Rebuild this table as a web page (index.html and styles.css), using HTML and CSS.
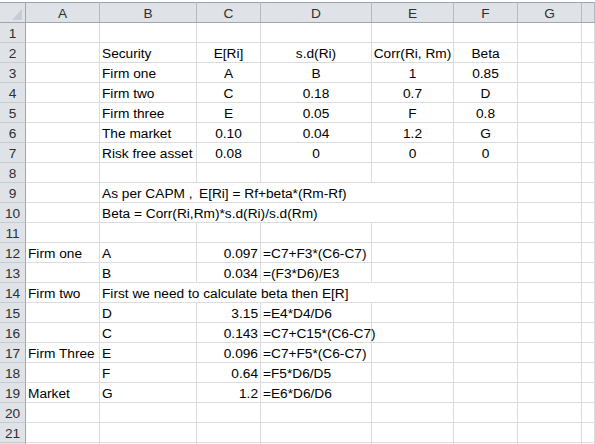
FILE: index.html
```html
<!DOCTYPE html>
<html>
<head>
<meta charset="utf-8">
<link rel="stylesheet" href="styles.css">
</head>
<body>
<div class="sheet">
  <div class="grid">
    <div class="corner"><svg width="10" height="11" viewBox="0 0 10 11"><polygon points="10,0 10,11 0,11" fill="#c8cdd3"/></svg></div>
    <div class="hd">A</div><div class="hd">B</div><div class="hd">C</div><div class="hd">D</div><div class="hd">E</div><div class="hd">F</div><div class="hd">G</div><div class="hd"></div>

    <div class="rh">1</div><div></div><div></div><div></div><div></div><div></div><div></div><div></div><div></div>
    <div class="rh">2</div><div></div><div>Security</div><div class="ctr">E[Ri]</div><div class="ctr">s.d(Ri)</div><div class="ctr">Corr(Ri, Rm)</div><div class="ctr">Beta</div><div></div><div></div>
    <div class="rh">3</div><div></div><div>Firm one</div><div class="ctr">A</div><div class="ctr">B</div><div class="ctr">1</div><div class="ctr">0.85</div><div></div><div></div>
    <div class="rh">4</div><div></div><div>Firm two</div><div class="ctr">C</div><div class="ctr">0.18</div><div class="ctr">0.7</div><div class="ctr">D</div><div></div><div></div>
    <div class="rh">5</div><div></div><div>Firm three</div><div class="ctr">E</div><div class="ctr">0.05</div><div class="ctr">F</div><div class="ctr">0.8</div><div></div><div></div>
    <div class="rh">6</div><div></div><div>The market</div><div class="ctr">0.10</div><div class="ctr">0.04</div><div class="ctr">1.2</div><div class="ctr">G</div><div></div><div></div>
    <div class="rh">7</div><div></div><div>Risk free asset</div><div class="ctr">0.08</div><div class="ctr">0</div><div class="ctr">0</div><div class="ctr">0</div><div></div><div></div>
    <div class="rh">8</div><div></div><div></div><div></div><div></div><div></div><div></div><div></div><div></div>
    <div class="rh">9</div><div></div><div class="nob">As per CAPM ,</div><div class="span3">E[Ri] = Rf+beta*(Rm-Rf)</div><div></div><div></div><div></div>
    <div class="rh">10</div><div></div><div class="span4">Beta = Corr(Ri,Rm)*s.d(Ri)/s.d(Rm)</div><div></div><div></div><div></div>
    <div class="rh">11</div><div></div><div></div><div></div><div></div><div></div><div></div><div></div><div></div>
    <div class="rh">12</div><div>Firm one</div><div>A</div><div class="r">0.097</div><div>=C7+F3*(C6-C7)</div><div></div><div></div><div></div><div></div>
    <div class="rh">13</div><div></div><div>B</div><div class="r">0.034</div><div>=(F3*D6)/E3</div><div></div><div></div><div></div><div></div>
    <div class="rh">14</div><div>Firm two</div><div class="span4">First we need to calculate beta then E[R]</div><div></div><div></div><div></div>
    <div class="rh">15</div><div></div><div>D</div><div class="r">3.15</div><div>=E4*D4/D6</div><div></div><div></div><div></div><div></div>
    <div class="rh">16</div><div></div><div>C</div><div class="r">0.143</div><div>=C7+C15*(C6-C7)</div><div></div><div></div><div></div><div></div>
    <div class="rh">17</div><div>Firm Three</div><div>E</div><div class="r">0.096</div><div>=C7+F5*(C6-C7)</div><div></div><div></div><div></div><div></div>
    <div class="rh">18</div><div></div><div>F</div><div class="r">0.64</div><div>=F5*D6/D5</div><div></div><div></div><div></div><div></div>
    <div class="rh">19</div><div>Market</div><div>G</div><div class="r">1.2</div><div>=E6*D6/D6</div><div></div><div></div><div></div><div></div>
    <div class="rh">20</div><div></div><div></div><div></div><div></div><div></div><div></div><div></div><div></div>
    <div class="rh">21</div><div></div><div></div><div></div><div></div><div></div><div></div><div></div><div></div>
    <div class="rh"></div><div></div><div></div><div></div><div></div><div></div><div></div><div></div><div></div>
  </div>
</div>
</body>
</html>
```
FILE: styles.css
```css
html, body {
  margin: 0;
  padding: 0;
  background: #ffffff;
  overflow: hidden;
}
body {
  font-family: "Liberation Sans", Arial, sans-serif;
  font-size: 13.7px;
  color: #000;
}
.sheet {
  padding-top: 2px;
}
.grid {
  display: grid;
  grid-template-columns: 26px 74px 97px 64px 111px 82px 64px 64px 1fr;
  grid-template-rows: 21px;
  grid-auto-rows: 20px;
}
.grid > div {
  box-sizing: border-box;
  display: flex;
  align-items: flex-end;
  line-height: 16px;
  white-space: nowrap;
  padding: 0 2px;
  border-right: 1px solid #dadcdd;
  border-bottom: 1px solid #dadcdd;
}
.grid > .hd {
  background: #dfe3e8;
  border-top: 1px solid #9ba3ac;
  border-right-color: #b4bac1;
  border-bottom-color: #9ea6ae;
  justify-content: center;
  color: #2f2f2f;
}
.grid > .corner {
  background: #dfe3e8;
  border-top: 1px solid #9ba3ac;
  border-right-color: #9ea6ae;
  border-bottom-color: #9ea6ae;
  justify-content: flex-end;
  padding: 0 3px 2px 0;
}
.corner svg {
  display: block;
}
.grid > .rh {
  background: #dfe3e8;
  justify-content: center;
  border-right-color: #9ea6ae;
  border-bottom-color: #c6cbd1;
  color: #2f2f2f;
  padding: 0;
}
.grid > .ctr {
  justify-content: center;
}
.grid > .r {
  justify-content: flex-end;
}
.grid > .nob {
  border-right-color: transparent;
}
.span3 {
  grid-column: span 3;
}
.span4 {
  grid-column: span 4;
}
```
